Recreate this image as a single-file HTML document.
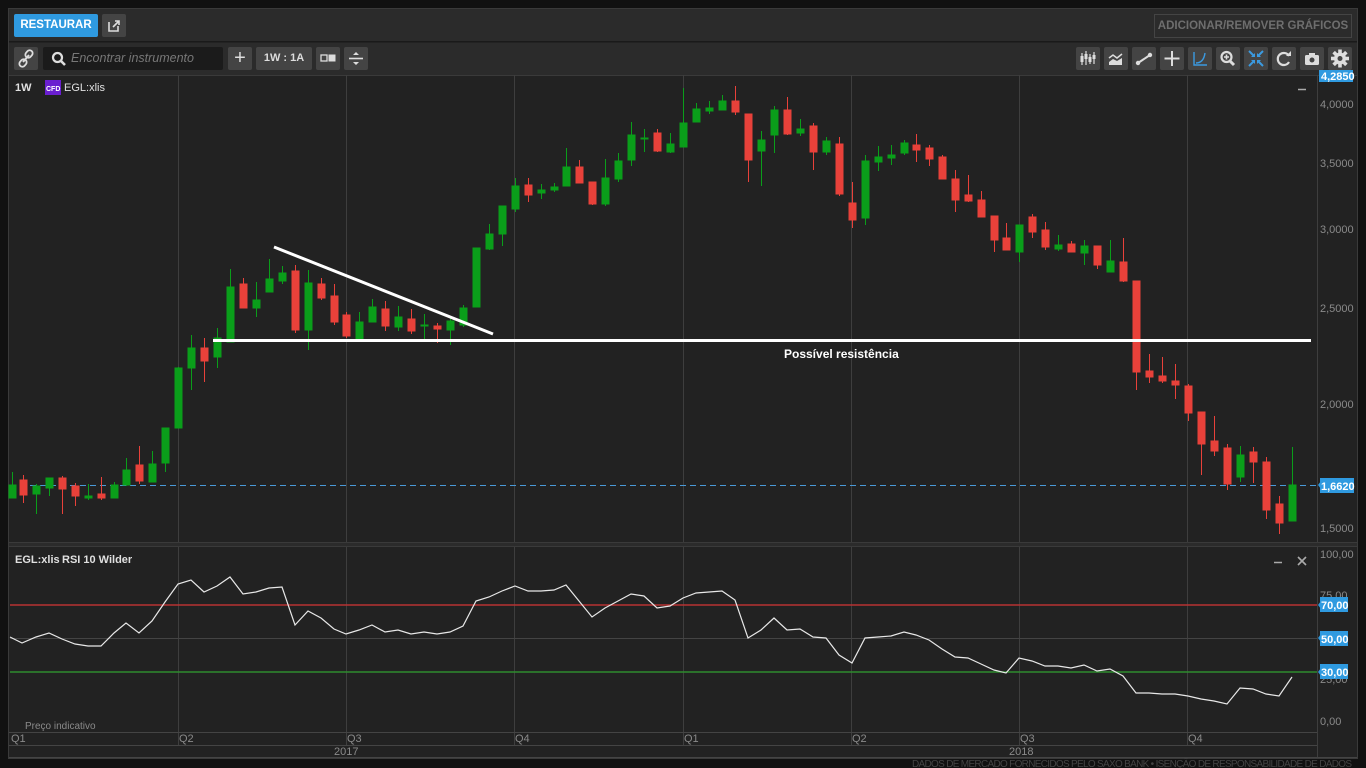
<!DOCTYPE html>
<html><head><meta charset="utf-8"><style>
*{margin:0;padding:0;box-sizing:border-box}
body{width:1366px;height:768px;background:#111;font-family:"Liberation Sans",sans-serif;position:relative;overflow:hidden}
.panel{position:absolute;left:8px;top:8px;width:1350px;height:751px;background:#222;border:1px solid #3a3a3a}
.bar{position:absolute;left:0;width:100%;background:#2b2b2b}
.btn{position:absolute;height:23px;background:#444;border-radius:2px;color:#ddd;font-size:11px;font-weight:bold;text-align:center;line-height:23px}
.abs{position:absolute}
</style></head><body>
<div class="panel">
 <div class="bar" style="top:0;height:33px;border-bottom:1px solid #1a1a1a"></div>
 <div class="bar" style="top:34px;height:33px;border-bottom:1px solid #3a3a3a"></div>
</div>
<div class="btn" style="left:14px;top:14px;width:84px;background:#2f9ae0;color:#fff;font-size:11.5px">RESTAURAR</div>
<div class="btn" style="left:102px;top:14px;width:24px"><svg width="24" height="23"><path d="M7 8v9h9v-5" stroke="#ddd" stroke-width="1.6" fill="none"/><path d="M11 13l6-6M13 7h4v4" stroke="#ddd" stroke-width="1.6" fill="none"/></svg></div>
<div class="abs" style="left:1154px;top:14px;width:198px;height:24px;border:1px solid #444;color:#6e6e6e;font-size:11.5px;font-weight:bold;text-align:center;line-height:22px">ADICIONAR/REMOVER GRÁFICOS</div>

<div class="btn" style="left:14px;top:47px;width:24px"><svg width="24" height="23"><path d="M9 15l6-7" stroke="#ddd" stroke-width="2"/><rect x="6" y="12" width="6" height="8" rx="3" transform="rotate(40 9 16)" stroke="#ddd" stroke-width="1.8" fill="none"/><rect x="12" y="3" width="6" height="8" rx="3" transform="rotate(40 15 7)" stroke="#ddd" stroke-width="1.8" fill="none"/></svg></div>
<div class="abs" style="left:43px;top:47px;width:180px;height:23px;background:#1b1b1b;border-radius:2px"><svg class="abs" style="left:8px;top:4px" width="16" height="16"><circle cx="6.5" cy="6.5" r="4.5" stroke="#ddd" stroke-width="2.2" fill="none"/><path d="M10 10l4 4" stroke="#ddd" stroke-width="2.6"/></svg><span class="abs" style="left:28px;top:4px;color:#777;font-size:12.5px;font-style:italic">Encontrar instrumento</span></div>
<div class="btn" style="left:228px;top:47px;width:24px;font-size:20px;font-weight:normal">+</div>
<div class="btn" style="left:256px;top:47px;width:56px">1W : 1A</div>
<div class="btn" style="left:316px;top:47px;width:24px"><svg width="24" height="23"><rect x="5" y="8" width="6" height="6" stroke="#ddd" stroke-width="1.3" fill="none"/><rect x="12.5" y="7.5" width="7" height="7" fill="#ddd"/></svg></div>
<div class="btn" style="left:344px;top:47px;width:24px"><svg width="24" height="23"><path d="M5 11.5h14" stroke="#ddd" stroke-width="1.6"/><path d="M9 8l3-3 3 3zM9 15l3 3 3-3z" fill="#ddd"/></svg></div>

<div class="btn" style="left:1076px;top:47px;width:24px"><svg width="24" height="23"><g stroke="#ddd" stroke-width="1.2"><path d="M6 6v12M10 4v14M14 7v10M18 5v12"/></g><g fill="#ddd"><rect x="4.5" y="9" width="3" height="6"/><rect x="8.5" y="7" width="3" height="5"/><rect x="12.5" y="10" width="3" height="5"/><rect x="16.5" y="8" width="3" height="4"/></g></svg></div>
<div class="btn" style="left:1104px;top:47px;width:24px"><svg width="24" height="23"><path d="M5 11l4-3 4 3 5-4" stroke="#ddd" stroke-width="1.5" fill="none"/><path d="M5 15l4-3 4 2 5-3v7H5z" fill="#ddd"/></svg></div>
<div class="btn" style="left:1132px;top:47px;width:24px"><svg width="24" height="23"><path d="M6 16l12-8" stroke="#ddd" stroke-width="2"/><circle cx="6" cy="16" r="2.2" fill="#ddd"/><circle cx="18" cy="8" r="2.2" fill="#ddd"/></svg></div>
<div class="btn" style="left:1160px;top:47px;width:24px"><svg width="24" height="23"><path d="M12 4v15M4.5 11.5h15" stroke="#ddd" stroke-width="2"/></svg></div>
<div class="btn" style="left:1188px;top:47px;width:24px"><svg width="24" height="23"><path d="M6 5v13h13M8 16c5 0 8-3 9-10" stroke="#3b9ae0" stroke-width="1.4" fill="none"/></svg></div>
<div class="btn" style="left:1216px;top:47px;width:24px"><svg width="24" height="23"><circle cx="10.5" cy="10" r="5" stroke="#ddd" stroke-width="2.2" fill="none"/><path d="M14 14l4 4" stroke="#ddd" stroke-width="3"/><path d="M10.5 7.5v5M8 10h5" stroke="#ddd" stroke-width="1.6"/></svg></div>
<div class="btn" style="left:1244px;top:47px;width:24px"><svg width="24" height="23"><g stroke="#3b9ae0" stroke-width="2"><path d="M5 4l5 5M19 4l-5 5M5 19l5-5M19 19l-5-5"/></g><g fill="#3b9ae0"><path d="M11 10H7l4-4zM13 10h4l-4-4zM11 13H7l4 4zM13 13h4l-4 4z"/></g></svg></div>
<div class="btn" style="left:1272px;top:47px;width:24px"><svg width="24" height="23"><path d="M17 9a6 6 0 1 0 0 6" stroke="#ddd" stroke-width="2.2" fill="none"/><path d="M14 9h5V4z" fill="#ddd"/></svg></div>
<div class="btn" style="left:1300px;top:47px;width:24px"><svg width="24" height="23"><rect x="5" y="8" width="14" height="10" rx="1.5" fill="#ddd"/><rect x="9" y="6" width="6" height="3" fill="#ddd"/><circle cx="12" cy="13" r="2.5" fill="#444"/></svg></div>
<div class="btn" style="left:1328px;top:47px;width:24px"><svg width="24" height="23"><g transform="translate(12 11.5)" fill="#ddd"><circle r="6"/><g><rect x="-1.8" y="-9" width="3.6" height="18"/><rect x="-1.8" y="-9" width="3.6" height="18" transform="rotate(45)"/><rect x="-1.8" y="-9" width="3.6" height="18" transform="rotate(90)"/><rect x="-1.8" y="-9" width="3.6" height="18" transform="rotate(135)"/></g><circle r="2.5" fill="#444"/></g></svg></div>

<svg class="abs" style="left:0;top:0" width="1366" height="768">
 <g stroke="#3e3e3e" stroke-width="1">
  <path d="M178.5 75V745M346.5 75V745M514.5 75V745M683.5 75V745M851.5 75V745M1019.5 75V745M1187.5 75V745"/>
  <path d="M1317.5 75V757"/>
 </g>
 <rect x="9" y="542" width="1348" height="4" fill="#2b2b2b"/>
 <path d="M9 542.5H1357M9 546.5H1357" stroke="#3a3a3a"/>
 <path d="M9 732.5H1317M9 745.5H1317M9 757.5H1357" stroke="#444"/>
 <path d="M10 485.5H1318" stroke="#4a9ad8" stroke-dasharray="6 4"/>
 <g stroke="#0a9e1a" stroke-width="1" fill="#0a9e1a">
 <line x1="12.5" x2="12.5" y1="472" y2="498"/><rect x="9" y="485" width="7" height="13"/>
 <line x1="36.5" x2="36.5" y1="484" y2="514"/><rect x="33" y="486" width="7" height="8"/>
 <line x1="49.5" x2="49.5" y1="478" y2="496"/><rect x="46" y="478" width="7" height="10"/>
 <line x1="88.5" x2="88.5" y1="484" y2="500"/><rect x="85" y="496" width="7" height="2"/>
 <line x1="114.5" x2="114.5" y1="482" y2="498"/><rect x="111" y="485" width="7" height="13"/>
 <line x1="126.5" x2="126.5" y1="458" y2="486"/><rect x="123" y="470" width="7" height="15"/>
 <line x1="152.5" x2="152.5" y1="451" y2="482"/><rect x="149" y="464" width="7" height="18"/>
 <line x1="165.5" x2="165.5" y1="428" y2="472"/><rect x="162" y="428" width="7" height="35"/>
 <line x1="178.5" x2="178.5" y1="367" y2="428"/><rect x="175" y="368" width="7" height="60"/>
 <line x1="191.5" x2="191.5" y1="335" y2="390"/><rect x="188" y="348" width="7" height="20"/>
 <line x1="217.5" x2="217.5" y1="328" y2="368"/><rect x="214" y="338" width="7" height="19"/>
 <line x1="230.5" x2="230.5" y1="269" y2="342"/><rect x="227" y="287" width="7" height="55"/>
 <line x1="256.5" x2="256.5" y1="282" y2="317"/><rect x="253" y="300" width="7" height="8"/>
 <line x1="269.5" x2="269.5" y1="259" y2="292"/><rect x="266" y="279" width="7" height="13"/>
 <line x1="282.5" x2="282.5" y1="266" y2="284"/><rect x="279" y="273" width="7" height="8"/>
 <line x1="308.5" x2="308.5" y1="270" y2="350"/><rect x="305" y="283" width="7" height="47"/>
 <line x1="359.5" x2="359.5" y1="312" y2="339"/><rect x="356" y="322" width="7" height="17"/>
 <line x1="372.5" x2="372.5" y1="299" y2="322"/><rect x="369" y="307" width="7" height="15"/>
 <line x1="398.5" x2="398.5" y1="306" y2="331"/><rect x="395" y="317" width="7" height="10"/>
 <line x1="424.5" x2="424.5" y1="314" y2="340"/><rect x="421" y="325" width="7" height="1"/>
 <line x1="450.5" x2="450.5" y1="316" y2="345"/><rect x="447" y="321" width="7" height="9"/>
 <line x1="463.5" x2="463.5" y1="305" y2="327"/><rect x="460" y="308" width="7" height="17"/>
 <rect x="473" y="248" width="7" height="59"/>
 <line x1="489.5" x2="489.5" y1="224" y2="250"/><rect x="486" y="234" width="7" height="15"/>
 <line x1="502.5" x2="502.5" y1="206" y2="246"/><rect x="499" y="206" width="7" height="28"/>
 <line x1="515.5" x2="515.5" y1="178" y2="212"/><rect x="512" y="186" width="7" height="23"/>
 <line x1="541.5" x2="541.5" y1="184" y2="199"/><rect x="538" y="190" width="7" height="3"/>
 <line x1="554.5" x2="554.5" y1="183" y2="192"/><rect x="551" y="187" width="7" height="3"/>
 <line x1="566.5" x2="566.5" y1="148" y2="186"/><rect x="563" y="167" width="7" height="19"/>
 <line x1="605.5" x2="605.5" y1="159" y2="206"/><rect x="602" y="178" width="7" height="26"/>
 <line x1="618.5" x2="618.5" y1="153" y2="182"/><rect x="615" y="161" width="7" height="18"/>
 <line x1="631.5" x2="631.5" y1="122" y2="166"/><rect x="628" y="135" width="7" height="25"/>
 <line x1="644.5" x2="644.5" y1="129" y2="152"/><rect x="641" y="138" width="7" height="1"/>
 <line x1="670.5" x2="670.5" y1="133" y2="153"/><rect x="667" y="144" width="7" height="8"/>
 <line x1="683.5" x2="683.5" y1="88" y2="147"/><rect x="680" y="123" width="7" height="24"/>
 <line x1="696.5" x2="696.5" y1="103" y2="122"/><rect x="693" y="109" width="7" height="13"/>
 <line x1="709.5" x2="709.5" y1="101" y2="114"/><rect x="706" y="108" width="7" height="3"/>
 <line x1="722.5" x2="722.5" y1="95" y2="110"/><rect x="719" y="101" width="7" height="9"/>
 <line x1="761.5" x2="761.5" y1="131" y2="186"/><rect x="758" y="140" width="7" height="11"/>
 <line x1="774.5" x2="774.5" y1="106" y2="153"/><rect x="771" y="110" width="7" height="25"/>
 <line x1="800.5" x2="800.5" y1="119" y2="136"/><rect x="797" y="129" width="7" height="4"/>
 <line x1="826.5" x2="826.5" y1="137" y2="155"/><rect x="823" y="141" width="7" height="11"/>
 <line x1="865.5" x2="865.5" y1="155" y2="225"/><rect x="862" y="161" width="7" height="57"/>
 <line x1="878.5" x2="878.5" y1="146" y2="171"/><rect x="875" y="157" width="7" height="5"/>
 <line x1="891.5" x2="891.5" y1="145" y2="165"/><rect x="888" y="155" width="7" height="3"/>
 <line x1="904.5" x2="904.5" y1="140" y2="155"/><rect x="901" y="143" width="7" height="10"/>
 <line x1="1019.5" x2="1019.5" y1="225" y2="262"/><rect x="1016" y="225" width="7" height="27"/>
 <line x1="1058.5" x2="1058.5" y1="235" y2="251"/><rect x="1055" y="245" width="7" height="4"/>
 <line x1="1084.5" x2="1084.5" y1="240" y2="265"/><rect x="1081" y="246" width="7" height="7"/>
 <line x1="1110.5" x2="1110.5" y1="240" y2="272"/><rect x="1107" y="261" width="7" height="11"/>
 <line x1="1240.5" x2="1240.5" y1="446" y2="482"/><rect x="1237" y="455" width="7" height="22"/>
 <line x1="1292.5" x2="1292.5" y1="447" y2="521"/><rect x="1289" y="485" width="7" height="36"/>
 </g>
 <g stroke="#e8413a" stroke-width="1" fill="#e8413a">
 <line x1="23.5" x2="23.5" y1="475" y2="503"/><rect x="20" y="480" width="7" height="15"/>
 <line x1="62.5" x2="62.5" y1="476" y2="514"/><rect x="59" y="478" width="7" height="11"/>
 <line x1="75.5" x2="75.5" y1="483" y2="506"/><rect x="72" y="486" width="7" height="10"/>
 <line x1="101.5" x2="101.5" y1="477" y2="500"/><rect x="98" y="494" width="7" height="4"/>
 <line x1="139.5" x2="139.5" y1="446" y2="484"/><rect x="136" y="465" width="7" height="16"/>
 <line x1="204.5" x2="204.5" y1="338" y2="382"/><rect x="201" y="348" width="7" height="13"/>
 <line x1="243.5" x2="243.5" y1="278" y2="308"/><rect x="240" y="284" width="7" height="24"/>
 <line x1="295.5" x2="295.5" y1="265" y2="333"/><rect x="292" y="271" width="7" height="59"/>
 <line x1="321.5" x2="321.5" y1="278" y2="300"/><rect x="318" y="284" width="7" height="14"/>
 <line x1="334.5" x2="334.5" y1="284" y2="325"/><rect x="331" y="296" width="7" height="26"/>
 <line x1="346.5" x2="346.5" y1="312" y2="338"/><rect x="343" y="315" width="7" height="21"/>
 <line x1="385.5" x2="385.5" y1="301" y2="331"/><rect x="382" y="309" width="7" height="17"/>
 <line x1="411.5" x2="411.5" y1="309" y2="334"/><rect x="408" y="319" width="7" height="12"/>
 <line x1="437.5" x2="437.5" y1="323" y2="343"/><rect x="434" y="326" width="7" height="3"/>
 <line x1="528.5" x2="528.5" y1="178" y2="202"/><rect x="525" y="185" width="7" height="10"/>
 <line x1="579.5" x2="579.5" y1="160" y2="183"/><rect x="576" y="167" width="7" height="16"/>
 <line x1="592.5" x2="592.5" y1="182" y2="205"/><rect x="589" y="182" width="7" height="22"/>
 <line x1="657.5" x2="657.5" y1="129" y2="152"/><rect x="654" y="133" width="7" height="18"/>
 <line x1="735.5" x2="735.5" y1="86" y2="115"/><rect x="732" y="101" width="7" height="11"/>
 <line x1="748.5" x2="748.5" y1="114" y2="182"/><rect x="745" y="114" width="7" height="46"/>
 <line x1="787.5" x2="787.5" y1="97" y2="135"/><rect x="784" y="110" width="7" height="24"/>
 <line x1="813.5" x2="813.5" y1="123" y2="170"/><rect x="810" y="126" width="7" height="26"/>
 <line x1="839.5" x2="839.5" y1="137" y2="196"/><rect x="836" y="144" width="7" height="50"/>
 <line x1="852.5" x2="852.5" y1="182" y2="228"/><rect x="849" y="203" width="7" height="17"/>
 <line x1="916.5" x2="916.5" y1="134" y2="162"/><rect x="913" y="145" width="7" height="5"/>
 <line x1="929.5" x2="929.5" y1="145" y2="166"/><rect x="926" y="148" width="7" height="11"/>
 <line x1="942.5" x2="942.5" y1="155" y2="179"/><rect x="939" y="157" width="7" height="22"/>
 <line x1="955.5" x2="955.5" y1="170" y2="212"/><rect x="952" y="179" width="7" height="21"/>
 <line x1="968.5" x2="968.5" y1="175" y2="202"/><rect x="965" y="195" width="7" height="6"/>
 <line x1="981.5" x2="981.5" y1="191" y2="217"/><rect x="978" y="200" width="7" height="17"/>
 <line x1="994.5" x2="994.5" y1="216" y2="252"/><rect x="991" y="216" width="7" height="24"/>
 <line x1="1006.5" x2="1006.5" y1="223" y2="250"/><rect x="1003" y="238" width="7" height="12"/>
 <line x1="1032.5" x2="1032.5" y1="214" y2="238"/><rect x="1029" y="217" width="7" height="15"/>
 <line x1="1045.5" x2="1045.5" y1="222" y2="250"/><rect x="1042" y="230" width="7" height="17"/>
 <line x1="1071.5" x2="1071.5" y1="241" y2="252"/><rect x="1068" y="244" width="7" height="8"/>
 <line x1="1097.5" x2="1097.5" y1="246" y2="269"/><rect x="1094" y="246" width="7" height="19"/>
 <line x1="1123.5" x2="1123.5" y1="238" y2="282"/><rect x="1120" y="262" width="7" height="19"/>
 <line x1="1136.5" x2="1136.5" y1="281" y2="390"/><rect x="1133" y="281" width="7" height="91"/>
 <line x1="1149.5" x2="1149.5" y1="354" y2="383"/><rect x="1146" y="371" width="7" height="6"/>
 <line x1="1162.5" x2="1162.5" y1="357" y2="383"/><rect x="1159" y="376" width="7" height="5"/>
 <line x1="1175.5" x2="1175.5" y1="364" y2="399"/><rect x="1172" y="381" width="7" height="4"/>
 <line x1="1188.5" x2="1188.5" y1="384" y2="421"/><rect x="1185" y="386" width="7" height="27"/>
 <line x1="1201.5" x2="1201.5" y1="412" y2="475"/><rect x="1198" y="412" width="7" height="32"/>
 <line x1="1214.5" x2="1214.5" y1="416" y2="456"/><rect x="1211" y="441" width="7" height="10"/>
 <line x1="1227.5" x2="1227.5" y1="444" y2="490"/><rect x="1224" y="448" width="7" height="36"/>
 <line x1="1253.5" x2="1253.5" y1="447" y2="483"/><rect x="1250" y="452" width="7" height="10"/>
 <line x1="1266.5" x2="1266.5" y1="457" y2="519"/><rect x="1263" y="462" width="7" height="48"/>
 <line x1="1279.5" x2="1279.5" y1="496" y2="534"/><rect x="1276" y="504" width="7" height="19"/>
 </g>
 <path d="M274 247L493 334" stroke="#fff" stroke-width="3"/>
 <path d="M213 340.5H1311" stroke="#fff" stroke-width="3"/>
 <text x="784" y="358" fill="#fff" font-size="12" font-weight="bold" font-family="Liberation Sans">Possível resistência</text>
 <path d="M10 638.5H1317" stroke="#444"/>
 <path d="M10 605H1317" stroke="#b83232" stroke-width="1.5"/>
 <path d="M10 672H1317" stroke="#2e8b2e" stroke-width="1.5"/>
 <polyline fill="none" stroke="#e8e8e8" stroke-width="1.2" points="10,637 22,643 36,637 49,633 62,639 75,644 88,646 101,646 114,633 126,623 139,633 152,621 165,602 178,584 191,580 204,592 217,586 230,577 243,594 256,592 269,588 282,587 295,625 308,611 321,618 334,629 346,634 359,630 372,625 385,632 398,630 411,634 424,632 437,634 450,632 463,626 476,601 489,597 502,591 515,586 528,591 541,591 554,590 566,585 579,601 592,617 605,608 618,601 631,594 644,596 657,608 670,606 683,598 696,593 709,592 722,591 735,600 748,638 761,630 774,618 787,630 800,629 813,637 826,638 839,655 852,663 865,638 878,637 891,636 904,632 916,635 929,640 942,649 955,657 968,658 981,664 994,670 1006,673 1019,658 1032,661 1045,666 1058,666 1071,668 1084,665 1097,671 1110,669 1123,676 1136,693 1149,693 1162,694 1175,694 1188,696 1201,699 1214,701 1227,704 1240,688 1253,689 1266,694 1279,696 1292,677"/>
 <g fill="#8a8a8a" font-size="11" font-family="Liberation Sans">
  <text x="1320" y="108">4,0000</text><text x="1320" y="167">3,5000</text><text x="1320" y="233">3,0000</text><text x="1320" y="312">2,5000</text><text x="1320" y="408">2,0000</text><text x="1320" y="532">1,5000</text>
  <text x="1320" y="558">100,00</text><text x="1320" y="599">75,00</text><text x="1320" y="683">25,00</text><text x="1320" y="725">0,00</text>
  <text x="11" y="742">Q1</text><text x="179" y="742">Q2</text><text x="347" y="742">Q3</text><text x="515" y="742">Q4</text><text x="684" y="742">Q1</text><text x="852" y="742">Q2</text><text x="1020" y="742">Q3</text><text x="1188" y="742">Q4</text>
  <text x="334" y="755">2017</text><text x="1009" y="755">2018</text>
  <text x="25" y="729" font-size="10">Preço indicativo</text>
 </g>
 <text x="912" y="767" fill="#444" font-size="10" textLength="440" font-family="Liberation Sans">DADOS DE MERCADO FORNECIDOS PELO SAXO BANK • ISENÇÃO DE RESPONSABILIDADE DE DADOS</text>
 <g font-family="Liberation Sans" font-size="11" font-weight="bold" fill="#fff">
  <rect x="1319" y="70" width="34" height="12" fill="#2f9ae0"/><text x="1321" y="80">4,2850</text>
  <path d="M1318 485l3-4v8z" fill="#2f9ae0"/><rect x="1320" y="478" width="34" height="15" fill="#2f9ae0"/><text x="1321" y="490">1,6620</text>
  <path d="M1318 605l3-4v8z" fill="#2f9ae0"/><rect x="1320" y="597" width="28" height="15" fill="#2f9ae0"/><text x="1321" y="609">70,00</text>
  <path d="M1318 638l3-4v8z" fill="#2f9ae0"/><rect x="1320" y="631" width="28" height="15" fill="#2f9ae0"/><text x="1321" y="643">50,00</text>
  <path d="M1318 672l3-4v8z" fill="#2f9ae0"/><rect x="1320" y="664" width="28" height="15" fill="#2f9ae0"/><text x="1321" y="676">30,00</text>
 </g>
 <g font-family="Liberation Sans" font-size="11" font-weight="bold" fill="#e0e0e0">
  <text x="15" y="91">1W</text>
  <rect x="45" y="80" width="16" height="15" fill="#6a1fd0"/><text x="46" y="91" font-size="7" fill="#fff">CFD</text>
  <text x="64" y="91" font-weight="normal">EGL:xlis</text>
  <text x="15" y="563">EGL:xlis</text><text x="62" y="563">RSI 10 Wilder</text>
 </g>
 <path d="M1298 89.5h8M1274 562.5h8" stroke="#aaa" stroke-width="1.5"/>
 <path d="M1298 557l8 8M1306 557l-8 8" stroke="#aaa" stroke-width="1.6"/>
</svg>
</body></html>
